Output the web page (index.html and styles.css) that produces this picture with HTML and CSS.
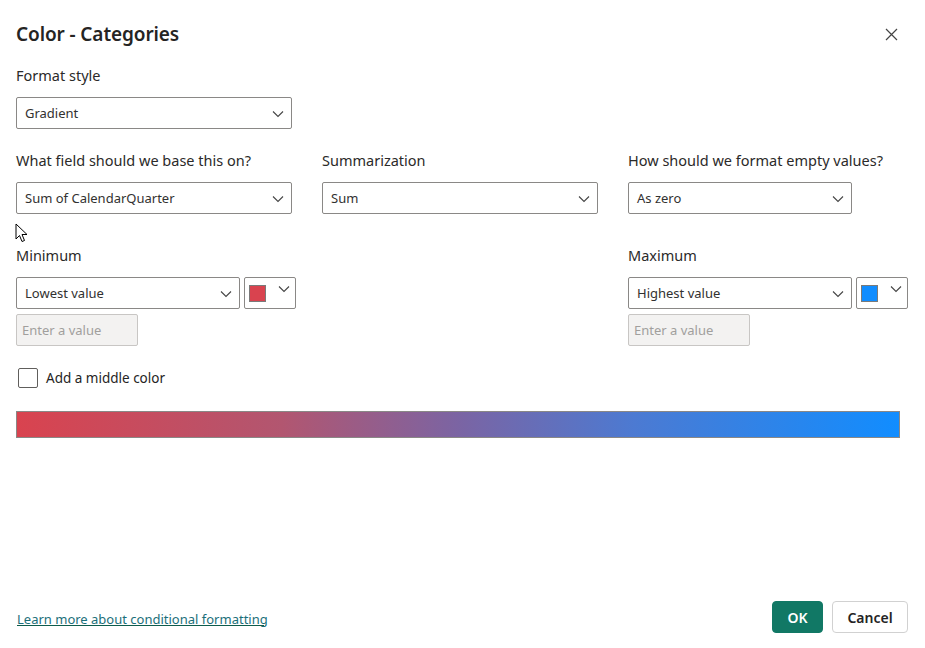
FILE: index.html
```html
<!DOCTYPE html>
<html>
<head>
<meta charset="utf-8">
<link rel="stylesheet" href="styles.css">
</head>
<body>
<div class="dialog">
  <header class="head">
    <h1 class="title">Color - Categories</h1>
    <button class="close" aria-label="Close">
      <svg width="13" height="13" viewBox="0 0 13 13"><path d="M1 1 L12 12 M12 1 L1 12" stroke="#444" stroke-width="1.2" fill="none"/></svg>
    </button>
  </header>

  <div class="field">
    <div class="label">Format style</div>
    <div class="select w276"><span>Gradient</span><svg class="chev" width="12" height="8" viewBox="0 0 12 8"><path d="M1 1.5 L6 6.5 L11 1.5" stroke="#444" stroke-width="1.1" fill="none"/></svg></div>
  </div>

  <div class="grid3">
    <div class="field">
      <div class="label">What field should we base this on?</div>
      <div class="select w276"><span>Sum of CalendarQuarter</span><svg class="chev" width="12" height="8" viewBox="0 0 12 8"><path d="M1 1.5 L6 6.5 L11 1.5" stroke="#444" stroke-width="1.1" fill="none"/></svg></div>
    </div>
    <div class="field">
      <div class="label">Summarization</div>
      <div class="select w276"><span>Sum</span><svg class="chev" width="12" height="8" viewBox="0 0 12 8"><path d="M1 1.5 L6 6.5 L11 1.5" stroke="#444" stroke-width="1.1" fill="none"/></svg></div>
    </div>
    <div class="field">
      <div class="label">How should we format empty values?</div>
      <div class="select w224"><span>As zero</span><svg class="chev" width="12" height="8" viewBox="0 0 12 8"><path d="M1 1.5 L6 6.5 L11 1.5" stroke="#444" stroke-width="1.1" fill="none"/></svg></div>
    </div>
  </div>

  <div class="grid3 minmax">
    <div class="field">
      <div class="label">Minimum</div>
      <div class="row">
        <div class="select w224"><span>Lowest value</span><svg class="chev" width="12" height="8" viewBox="0 0 12 8"><path d="M1 1.5 L6 6.5 L11 1.5" stroke="#444" stroke-width="1.1" fill="none"/></svg></div>
        <div class="colorbtn"><span class="swatch red"></span><svg class="chev2" width="12" height="8" viewBox="0 0 12 8"><path d="M1 1.5 L6 6.5 L11 1.5" stroke="#444" stroke-width="1.1" fill="none"/></svg></div>
      </div>
      <div class="input">Enter a value</div>
    </div>
    <div></div>
    <div class="field">
      <div class="label">Maximum</div>
      <div class="row">
        <div class="select w224"><span>Highest value</span><svg class="chev" width="12" height="8" viewBox="0 0 12 8"><path d="M1 1.5 L6 6.5 L11 1.5" stroke="#444" stroke-width="1.1" fill="none"/></svg></div>
        <div class="colorbtn"><span class="swatch blue"></span><svg class="chev2" width="12" height="8" viewBox="0 0 12 8"><path d="M1 1.5 L6 6.5 L11 1.5" stroke="#444" stroke-width="1.1" fill="none"/></svg></div>
      </div>
      <div class="input">Enter a value</div>
    </div>
  </div>

  <label class="check"><span class="box"></span><span>Add a middle color</span></label>

  <div class="gradient"></div>

  <footer class="foot">
    <a class="link" href="#">Learn more about conditional formatting</a>
    <div class="buttons">
      <button class="btn ok">OK</button>
      <button class="btn cancel">Cancel</button>
    </div>
  </footer>

  <svg class="cursor" width="13" height="20" viewBox="0 0 13 20"><path d="M1 1 L1 16 L4.5 12.5 L7 18.5 L9.5 17.5 L7 11.5 L12 11.5 Z" fill="#fff" stroke="#000" stroke-width="1" stroke-linejoin="round"/></svg>
</div>
</body>
</html>
```

FILE: styles.css
```css
* { box-sizing: border-box; }
html, body { margin: 0; padding: 0; background: #fff; }
body {
  font-family: "Segoe UI", "Noto Sans", "Open Sans", sans-serif;
  color: #252423;
  width: 925px;
  height: 648px;
  overflow: hidden;
}
.dialog {
  position: relative;
  width: 925px;
  height: 648px;
  padding: 20px 17px 0 16px;
  display: flex;
  flex-direction: column;
}
.head {
  display: flex;
  justify-content: space-between;
  align-items: center;
  height: 28px;
}
.title {
  margin: 0;
  font-size: 19px;
  font-weight: 600;
  color: #252423;
  letter-spacing: -0.1px;
}
.close {
  border: 0;
  background: none;
  padding: 0;
  margin-right: 10px;
  margin-top: 0;
  width: 13px;
  height: 13px;
  display: flex;
}
.field { display: flex; flex-direction: column; }
.label {
  font-size: 14.5px;
  line-height: 20px;
  color: #2b2a29;
  margin-bottom: 12px;
}
.head + .field { margin-top: 17px; }
.select {
  height: 32px;
  border: 1px solid #8a8886;
  border-radius: 2px;
  display: flex;
  align-items: center;
  justify-content: space-between;
  padding: 0 7px 0 8px;
  font-size: 13px;
  color: #323130;
}
.w276 { width: 276px; }
.w224 { width: 224px; }
.chev { margin-top: 1px; }
.grid3 {
  display: grid;
  grid-template-columns: 290px 290px 290px;
  column-gap: 16px;
  margin-top: 21px;
}
.minmax { margin-top: 31px; }
.row { display: flex; gap: 4px; }
.colorbtn {
  width: 52px;
  height: 32px;
  border: 1px solid #8a8886;
  border-radius: 2px;
  display: flex;
  align-items: flex-start;
  padding: 7px 0 0 4px;
  gap: 12px;
}
.swatch {
  width: 17px;
  height: 17px;
  border: 1px solid #7a7a7a;
}
.red { background: #d9434f; }
.blue { background: #118dff; }
.chev2 { margin-top: 0px; }
.input {
  margin-top: 5px;
  width: 122px;
  height: 32px;
  border: 1px solid #c8c6c4;
  border-radius: 2px;
  background: #f3f2f1;
  color: #a19f9d;
  font-size: 13px;
  padding: 0 5px;
  display: flex;
  align-items: center;
}
.check {
  display: flex;
  align-items: center;
  gap: 8px;
  margin-top: 22px;
  margin-left: 2px;
  font-size: 13.5px;
  color: #252423;
}
.box {
  width: 20px;
  height: 20px;
  border: 1px solid #605e5c;
  border-radius: 2px;
}
.gradient {
  margin-top: 23px;
  width: 884px;
  height: 27px;
  border: 1px solid #8a8886;
  background: linear-gradient(to right, #d9434f 0%, #b25670 30%, #7b64a3 50%, #4c7ad2 70%, #118dff 100%);
}
.foot {
  margin-top: auto;
  margin-bottom: 15px;
  display: flex;
  justify-content: space-between;
  align-items: center;
}
.link {
  margin-left: 1px;
  margin-top: 3px;
  font-size: 13px;
  color: #1b6f7a;
  text-decoration: underline;
  text-decoration-color: #0e5c4c;
}
.buttons { display: flex; gap: 9px; }
.btn {
  height: 32px;
  border-radius: 4px;
  font-family: inherit;
  font-size: 14px;
  font-weight: 600;
  padding: 0;
}
.ok {
  width: 51px;
  background: #117865;
  border: 1px solid #117865;
  color: #fff;
}
.cancel {
  width: 76px;
  background: #fff;
  border: 1px solid #d1d1d1;
  color: #242424;
}
.cursor {
  position: absolute;
  left: 15px;
  top: 223px;
}
```
